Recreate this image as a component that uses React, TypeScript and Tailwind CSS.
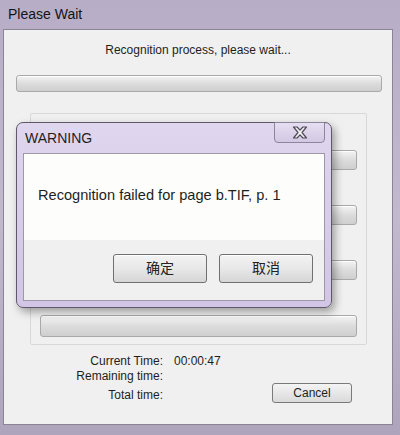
import React from "react";

const font = { fontFamily: '"Liberation Sans", Arial, "Noto Sans CJK SC", sans-serif' };

const Bar = ({ className }: { className: string }) => (
  <div
    className={
      "rounded-[3px] border border-[#a9a9a9] bg-gradient-to-b from-[#f4f4f4] via-[#dcdcdc] to-[#cfcfcf] shadow-[inset_0_1px_0_#ffffff] " +
      className
    }
  />
);

const DlgButton = ({ label }: { label: string }) => (
  <button className="flex h-[29px] w-[94px] items-center justify-center rounded-[3px] border border-[#707070] bg-gradient-to-b from-[#f3f3f3] via-[#e8e8e8] to-[#d6d6d6] text-[14px] text-[#222] shadow-[inset_0_1px_0_#ffffff]">
    {label}
  </button>
);

export default function App() {
  return (
    <div
      style={font}
      className="relative h-[435px] w-[400px] overflow-hidden bg-gradient-to-b from-[#b7adc6] via-[#c2b9cf] to-[#aea5bd]"
    >
      {/* title bar */}
      <div className="flex h-[29px] items-center pl-[8px] text-[14px] text-[#141414]">Please Wait</div>

      {/* client area */}
      <div className="ml-[3px] mr-[7px] h-[396px] border border-[#8a8594] bg-[#f0f0f0]">
        <div className="mt-[13px] h-[14px] text-center text-[12px] leading-[14px] text-[#1e1e1e]">
          Recognition process, please wait...
        </div>
        <Bar className="ml-[12px] mt-[18px] h-[17px] w-[366px]" />

        {/* group box */}
        <div className="ml-[26px] mt-[21px] flex h-[232px] w-[337px] flex-col gap-[35px] rounded-[2px] border border-[#d8d8d8] pl-[9px] pt-[36px]">
          <Bar className="h-[20px] w-[317px]" />
          <Bar className="h-[20px] w-[317px]" />
          <Bar className="h-[20px] w-[317px]" />
          <Bar className="h-[22px] w-[317px]" />
        </div>

        {/* times */}
        <div className="mt-[9px] flex items-start text-[12px] leading-[15px] text-[#1e1e1e]">
          <div className="flex w-[159px] flex-col items-end">
            <div>Current Time:</div>
            <div>Remaining time:</div>
            <div className="mt-[4px]">Total time:</div>
          </div>
          <div className="ml-[11px]">00:00:47</div>
          <button className="ml-auto mr-[40px] mt-[29px] flex h-[20px] w-[80px] items-center justify-center rounded-[3px] border border-[#7a7a7a] bg-gradient-to-b from-[#f4f4f4] to-[#dadada] text-[12px] text-[#1e1e1e]">
            Cancel
          </button>
        </div>
      </div>

      {/* warning dialog */}
      <div className="absolute left-[16px] top-[122px] h-[186px] w-[316px] rounded-[7px] border border-[#5e5868] bg-gradient-to-b from-[#e0d6ef] via-[#d8cdea] to-[#d2c5e6] shadow-[3px_4px_8px_rgba(0,0,0,0.35)]">
        <div className="flex h-[30px] items-center pl-[8px] text-[14px] text-[#1f1f1f]">WARNING</div>
        <div className="absolute right-[6px] top-[-1px] flex h-[21px] w-[51px] items-center justify-center rounded-b-[4px] border border-[#8d859a] bg-gradient-to-b from-[#e6def2] to-[#d3c8e3]">
          <svg width="16" height="13" viewBox="0 0 16 13">
            <path
              d="M1.5 1h3.6L8 4.2 10.9 1h3.6L10 6.5l4.5 5.5h-3.6L8 8.8 5.1 12H1.5L6 6.5z"
              fill="#f2f2f4"
              stroke="#4f4a58"
              strokeWidth="1.2"
              strokeLinejoin="round"
            />
          </svg>
        </div>
        <div className="mx-[6px] flex h-[148px] flex-col border border-[#9d97a8]">
          <div className="flex h-[86px] items-center bg-[#fdfefb] pb-[2px] pl-[14px] text-[14.6px] text-[#1e1e1e]">
            Recognition failed for page b.TIF, p. 1
          </div>
          <div className="flex flex-1 justify-end gap-[12px] bg-[#f0f0f0] pr-[11px] pt-[14px]">
            <DlgButton label="确定" />
            <DlgButton label="取消" />
          </div>
        </div>
      </div>
    </div>
  );
}
